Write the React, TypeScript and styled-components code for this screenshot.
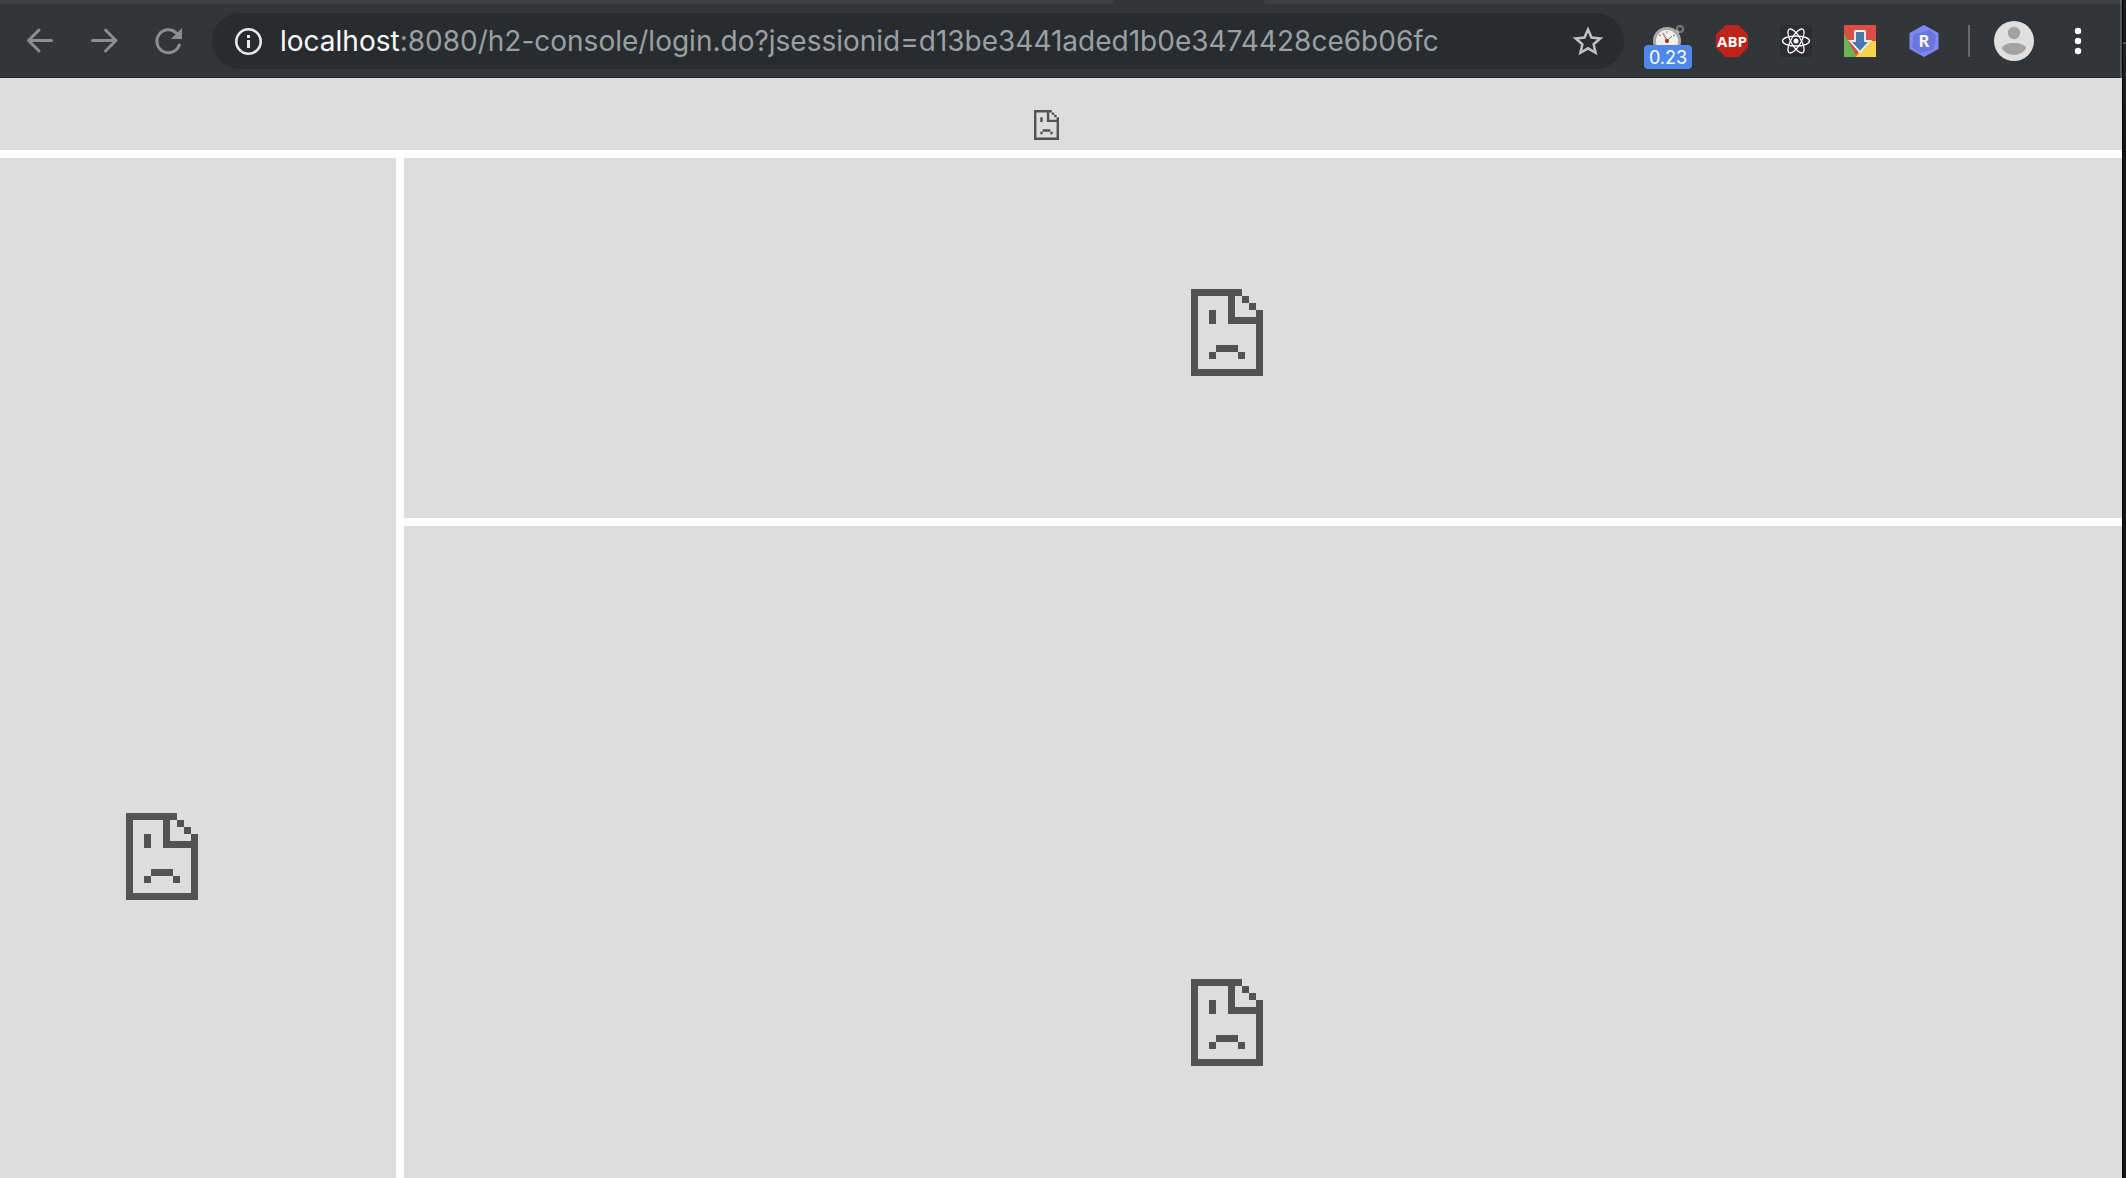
import React from "react";
import styled, { createGlobalStyle } from "styled-components";

const GlobalStyle = createGlobalStyle`
  html, body, #root { height: 100%; }
  body { margin: 0; background: #151515; overflow: hidden; font-family: Inter, Roboto, "Liberation Sans", sans-serif; }
`;

const Desktop = styled.div`
  height: 100%;
  display: flex;
  background: #151515;
`;

const Backdrop = styled.div`
  flex: none;
  width: 3px;
  background: linear-gradient(#1a1a1a 41px, #000000 41px 42px, #5c5c5c 42px 44px, #222222 44px, #151515 151px, #000000 151px 152px, #151515 152px);
`;

const Window = styled.div`
  flex: 1;
  min-width: 0;
  display: flex;
  flex-direction: column;
  background: #ffffff;
  border-right: 1px solid #000000;
`;

const TabStrip = styled.div`
  flex: none;
  height: 4px;
  display: flex;
  background: #323639;
  border-right: 2px solid #5d6163;
`;

const TabEdge = styled.div<{ $grow: number; $side: "left" | "right" }>`
  flex: ${(p) => p.$grow} 1 0;
  background: #3c4043;
  border-radius: ${(p) => (p.$side === "left" ? "0 0 16px 0" : "0 0 0 16px")};
`;

const ActiveTab = styled.div`
  flex: none;
  width: 150px;
`;

const Toolbar = styled.header`
  flex: none;
  box-sizing: border-box;
  height: 74px;
  display: flex;
  align-items: center;
  padding: 8px 14px 9px 24px;
  border-right: 2px solid #54585a;
  background: #323639;
  box-shadow: inset 0 -1px 0 #232629;
`;

const Nav = styled.nav`
  display: flex;
  gap: 32px;
`;

const IconButton = styled.button<{ $width?: number }>`
  flex: none;
  display: flex;
  align-items: center;
  justify-content: center;
  position: relative;
  width: ${(p) => p.$width ?? 32}px;
  height: 56px;
  padding: 0;
  border: 0;
  background: none;
  color: #8c8d8e;
  font: inherit;
`;

const AddressBar = styled.form`
  flex: 1;
  min-width: 0;
  height: 56px;
  box-sizing: border-box;
  display: flex;
  align-items: center;
  margin: 0 20px 0 28px;
  padding: 0 20px;
  border-radius: 28px;
  background: #282c2f;
`;

const Url = styled.a`
  flex: 1;
  min-width: 0;
  margin-left: 16px;
  overflow: hidden;
  white-space: nowrap;
  text-decoration: none;
  font-size: 28px;
  line-height: 40px;
  color: #9aa0a3;
`;

const Host = styled.span`
  color: #ffffff;
`;

const Extensions = styled.div`
  display: flex;
  align-items: center;
  gap: 16px;
`;

const Badge = styled.span`
  position: absolute;
  left: 0;
  top: 32px;
  width: 48px;
  height: 24px;
  border-radius: 4px;
  background: #4f88ec;
  color: #ffffff;
  font-size: 18px;
  line-height: 26px;
  text-align: center;
`;

const Divider = styled.div`
  width: 2px;
  height: 32px;
  margin: 0 8px 0 4px;
  background: #696c6e;
`;

const Frames = styled.main`
  flex: 1;
  min-height: 0;
  display: grid;
  grid-template: 72px 360px 1fr / 396px 1fr;
  gap: 8px;
  background: #ffffff;
`;

const Frame = styled.section<{ $area: string; $top: number }>`
  grid-area: ${(p) => p.$area};
  box-sizing: border-box;
  min-width: 0;
  display: flex;
  justify-content: center;
  align-items: flex-start;
  padding-top: ${(p) => p.$top}px;
  background: #dddddd;
`;

const Message = styled.div<{ $small?: boolean }>`
  width: ${(p) => (p.$small ? 54 : 144)}px;

  svg {
    display: block;
    width: ${(p) => (p.$small ? 25 : 72)}px;
    height: ${(p) => (p.$small ? 30 : 87)}px;
  }
`;

const SadPage = () => (
  <svg viewBox="0 0 72 87" preserveAspectRatio="none" fill="#535353" role="img" aria-label="Page unavailable">
    <path d="M0 0H51V7H44V28H65V21H72V87H0ZM7 7V80H65V35H37V7Z" fillRule="evenodd" />
    <path d="M51 7h7v7h-7zM58 14h7v7h-7zM18 21h7v14h-7zM25 56h22v7H25zM18 63h7v7h-7zM47 63h7v7h-7z" />
  </svg>
);

const Arrow = ({ forward }: { forward?: boolean }) => (
  <svg width="32" height="32" viewBox="0 0 32 32" fill="none" stroke="currentColor" strokeWidth="3" strokeLinecap="round" strokeLinejoin="round">
    {forward ? <path d="M4.500 15.500H27M17.500 5L28 15.500 17.500 26" /> : <path d="M27.500 15.500H5M15 5L4.500 15.500 15 26" />}
  </svg>
);

const Reload = () => (
  <svg width="32" height="32" viewBox="0 0 32 32" fill="none">
    <path d="M24.200 7.800A11.500 11.500 0 1 0 27.300 20" stroke="currentColor" strokeWidth="3" strokeLinecap="round" />
    <path d="M30 3V14H19Z" fill="currentColor" />
  </svg>
);

const Info = () => (
  <svg width="32" height="32" viewBox="0 0 32 32" fill="none">
    <circle cx="16.500" cy="16.500" r="12.200" stroke="#e8eaed" strokeWidth="2.600" />
    <path d="M15 10h3v3h-3zM15 15h3v8h-3z" fill="#e8eaed" />
  </svg>
);

const Star = () => (
  <svg width="32" height="32" viewBox="0 0 32 32" fill="none">
    <path d="M16 4.500L19.500 12.600 28.300 13.400 21.600 19.200 23.600 27.800 16 23.300 8.400 27.800 10.400 19.200 3.700 13.400 12.500 12.600Z" stroke="#bdc1c6" strokeWidth="2.500" />
  </svg>
);

const Stopwatch = () => (
  <svg width="32" height="32" viewBox="0 0 32 32">
    <circle cx="28" cy="4" r="3" fill="none" stroke="#777977" strokeWidth="2" />
    <path d="M23 9l3-3" stroke="#b8b8b6" strokeWidth="4" />
    <circle cx="15" cy="16" r="12.500" fill="#f0efed" stroke="#aaa9a5" strokeWidth="3" />
    <path d="M15 6v2M7 10l2 1M23 10l-2 1" stroke="#777" strokeWidth="1" />
    <path d="M11 8l4 8" stroke="#c77" strokeWidth="1.500" />
    <path d="M15 16l5-5" stroke="#777" strokeWidth="1" />
    <circle cx="15" cy="16" r="2" fill="#a22" />
  </svg>
);

const Abp = () => (
  <svg width="32" height="32" viewBox="0 0 32 32">
    <path d="M9.500 0H22.500L32 9.500V22.500L22.500 32H9.500L0 22.500V9.500Z" fill="#bd2318" />
    <text x="16" y="22" textAnchor="middle" fill="#fff" fontFamily="Open Sans, sans-serif" fontSize="15" fontWeight="700">ABP</text>
  </svg>
);

const ReactMark = () => (
  <svg width="32" height="32" viewBox="0 0 32 32" fill="none" stroke="#fff" strokeWidth="1.300">
    <rect width="32" height="32" fill="#2b2d30" stroke="none" />
    <ellipse cx="16" cy="16" rx="13.500" ry="5" />
    <ellipse cx="16" cy="16" rx="13.500" ry="5" transform="rotate(60 16 16)" />
    <ellipse cx="16" cy="16" rx="13.500" ry="5" transform="rotate(120 16 16)" />
    <circle cx="16" cy="16" r="2.500" fill="#fff" stroke="none" />
  </svg>
);

const Downloader = () => (
  <svg width="32" height="32" viewBox="0 0 32 32">
    <rect width="32" height="32" fill="#d94f43" />
    <path d="M0 9L13 32H0Z" fill="#6cb354" />
    <path d="M32 16H21L12 32H32Z" fill="#f7d44c" />
    <path d="M12 6H20Q21 6 21 7V16H26L16 27 6 16H11V7Q11 6 12 6Z" fill="#4779b0" stroke="#f4f6f8" strokeWidth="1.800" />
  </svg>
);

const Hexagon = () => (
  <svg width="32" height="32" viewBox="0 0 32 32">
    <path d="M16 1L29.500 8.500V23.500L16 31 2.500 23.500V8.500Z" fill="#7f88f2" stroke="#7f88f2" strokeWidth="2" strokeLinejoin="round" />
    <path d="M6 9L22 5 28 11 26 24 12 28 4 22Z" fill="#6c75de" />
    <text x="16" y="22" textAnchor="middle" fill="#fff" fontFamily="Lato, sans-serif" fontSize="16" fontWeight="900">R</text>
  </svg>
);

const Avatar = () => (
  <svg width="40" height="40" viewBox="0 0 40 40">
    <circle cx="20" cy="20" r="20" fill="#e0e0e0" />
    <circle cx="20" cy="12" r="6.200" fill="#a3a3a3" />
    <path d="M8 27.500C8 24 14 22 20 22S32 24 32 27.500Q28 34 20 34T8 27.500Z" fill="#a3a3a3" />
  </svg>
);

const Menu = () => (
  <svg width="8" height="32" viewBox="0 0 8 32" fill="#fff">
    <circle cx="4" cy="6" r="3.200" />
    <circle cx="4" cy="16" r="3.200" />
    <circle cx="4" cy="26" r="3.200" />
  </svg>
);

export default function App() {
  return (
    <>
      <GlobalStyle />
      <Desktop>
        <Window>
          <TabStrip>
            <TabEdge $grow={1114} $side="left" />
            <ActiveTab />
            <TabEdge $grow={856} $side="right" />
          </TabStrip>
          <Toolbar>
            <Nav>
              <IconButton aria-label="Back"><Arrow /></IconButton>
              <IconButton aria-label="Forward"><Arrow forward /></IconButton>
              <IconButton aria-label="Reload"><Reload /></IconButton>
            </Nav>
            <AddressBar>
              <IconButton type="button" aria-label="Site information"><Info /></IconButton>
              <Url href="#"><Host>localhost</Host>:8080/h2-console/login.do?jsessionid=d13be3441aded1b0e3474428ce6b06fc</Url>
              <IconButton type="button" aria-label="Bookmark"><Star /></IconButton>
            </AddressBar>
            <Extensions>
              <IconButton $width={48} aria-label="Page load time"><Stopwatch /><Badge>0.23</Badge></IconButton>
              <IconButton $width={48} aria-label="Ad blocker"><Abp /></IconButton>
              <IconButton $width={48} aria-label="React tools"><ReactMark /></IconButton>
              <IconButton $width={48} aria-label="Downloads"><Downloader /></IconButton>
              <IconButton $width={48} aria-label="Extension"><Hexagon /></IconButton>
              <Divider />
              <IconButton $width={40} aria-label="Profile"><Avatar /></IconButton>
              <IconButton $width={56} aria-label="Menu"><Menu /></IconButton>
            </Extensions>
          </Toolbar>
          <Frames>
            <Frame $area="1 / 1 / 2 / 3" $top={32}><Message $small><SadPage /></Message></Frame>
            <Frame $area="2 / 1 / 4 / 2" $top={655}><Message><SadPage /></Message></Frame>
            <Frame $area="2 / 2 / 3 / 3" $top={131}><Message><SadPage /></Message></Frame>
            <Frame $area="3 / 2 / 4 / 3" $top={453}><Message><SadPage /></Message></Frame>
          </Frames>
        </Window>
        <Backdrop />
      </Desktop>
    </>
  );
}
